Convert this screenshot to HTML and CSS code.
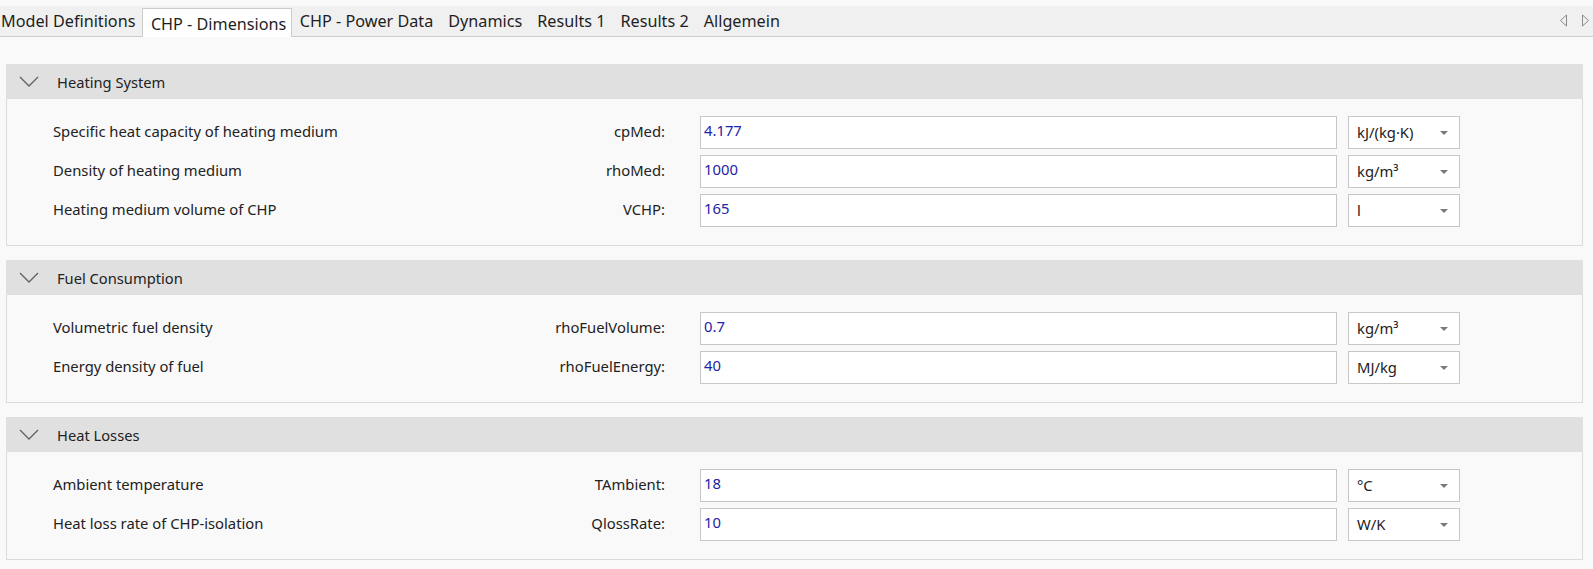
FILE: index.html
```html
<!DOCTYPE html>
<html lang="en">
<head>
<meta charset="UTF-8">
<meta name="viewport" content="width=device-width, initial-scale=1.0">
<title>CHP - Dimensions</title>
<link rel="stylesheet" href="styles.css">
</head>
<body>
<div class="tabbar">
  <div class="tab first">Model Definitions</div>
  <div class="tab active">CHP - Dimensions</div>
  <div class="tab">CHP - Power Data</div>
  <div class="tab">Dynamics</div>
  <div class="tab">Results 1</div>
  <div class="tab">Results 2</div>
  <div class="tab">Allgemein</div>
  <div class="tab-arrows">
    <svg width="9" height="13" viewBox="0 0 9 13"><path d="M7.5 1 L1.5 6.5 L7.5 12 Z" fill="none" stroke="#8a8a8a" stroke-width="1"/></svg>
    <svg width="9" height="13" viewBox="0 0 9 13"><path d="M1.5 1 L7.5 6.5 L1.5 12 Z" fill="none" stroke="#8a8a8a" stroke-width="1"/></svg>
  </div>
</div>

<div class="content">
  <div class="section">
    <div class="section-header">
      <svg class="chevron" width="20" height="11" viewBox="0 0 20 11"><path d="M1 1 L10 10 L19 1" fill="none" stroke="#606060" stroke-width="1.3"/></svg>
      <span>Heating System</span>
    </div>
    <div class="section-body">
      <div class="row">
        <div class="name">Specific heat capacity of heating medium</div>
        <div class="var">cpMed:</div>
        <div class="value">4.177</div>
        <div class="unit">kJ/(kg·K)<span class="arrow"></span></div>
      </div>
      <div class="row">
        <div class="name">Density of heating medium</div>
        <div class="var">rhoMed:</div>
        <div class="value">1000</div>
        <div class="unit">kg/m³<span class="arrow"></span></div>
      </div>
      <div class="row">
        <div class="name">Heating medium volume of CHP</div>
        <div class="var">VCHP:</div>
        <div class="value">165</div>
        <div class="unit">l<span class="arrow"></span></div>
      </div>
    </div>
  </div>

  <div class="section">
    <div class="section-header">
      <svg class="chevron" width="20" height="11" viewBox="0 0 20 11"><path d="M1 1 L10 10 L19 1" fill="none" stroke="#606060" stroke-width="1.3"/></svg>
      <span>Fuel Consumption</span>
    </div>
    <div class="section-body">
      <div class="row">
        <div class="name">Volumetric fuel density</div>
        <div class="var">rhoFuelVolume:</div>
        <div class="value">0.7</div>
        <div class="unit">kg/m³<span class="arrow"></span></div>
      </div>
      <div class="row">
        <div class="name">Energy density of fuel</div>
        <div class="var">rhoFuelEnergy:</div>
        <div class="value">40</div>
        <div class="unit">MJ/kg<span class="arrow"></span></div>
      </div>
    </div>
  </div>

  <div class="section">
    <div class="section-header">
      <svg class="chevron" width="20" height="11" viewBox="0 0 20 11"><path d="M1 1 L10 10 L19 1" fill="none" stroke="#606060" stroke-width="1.3"/></svg>
      <span>Heat Losses</span>
    </div>
    <div class="section-body">
      <div class="row">
        <div class="name">Ambient temperature</div>
        <div class="var">TAmbient:</div>
        <div class="value">18</div>
        <div class="unit">°C<span class="arrow"></span></div>
      </div>
      <div class="row">
        <div class="name">Heat loss rate of CHP-isolation</div>
        <div class="var">QlossRate:</div>
        <div class="value">10</div>
        <div class="unit">W/K<span class="arrow"></span></div>
      </div>
    </div>
  </div>
</div>
</body>
</html>
```

FILE: styles.css
```css
body {
  margin: 0;
  padding: 0;
  background-color: #f9f9f9;
  font-family: "Noto Sans", "Open Sans", sans-serif;
  color: #222;
}
.tabbar {
  margin-top: 6px;
  height: 30px;
  background-color: #f0f0f0;
  border-bottom: 1px solid #cccccc;
  display: flex;
  align-items: stretch;
  font-size: 16.2px;
}
.tab {
  padding: 0 7.5px;
  display: flex;
  align-items: center;
  color: #1e1e1e;
  white-space: nowrap;
}
.tab.first {
  padding-left: 1px;
}
.tab.active {
  margin-top: 2px;
  margin-bottom: -1px;
  margin-left: -1px;
  padding: 1px 5px 0 8px;
  background-color: #fff;
  border: 1px solid #cccccc;
  border-bottom: none;
}
.tab-arrows {
  margin-left: auto;
  margin-right: 3px;
  display: flex;
  align-items: center;
  gap: 13px;
  padding-bottom: 2px;
}
.content {
  padding: 27px 10px 0 6px;
}
.section {
  margin-bottom: 14px;
}
.section-header {
  height: 35px;
  background-color: #e0e0e0;
  display: flex;
  align-items: center;
  font-size: 14.7px;
}
.chevron {
  margin-left: 13px;
  margin-right: 18px;
}
.section-body {
  border: 1px solid #dadada;
  border-top: none;
  padding: 17px 0 18px 46px;
  display: flex;
  flex-direction: column;
  gap: 6px;
}
.row {
  display: flex;
  align-items: center;
  height: 33px;
  font-size: 14.8px;
}
.name {
  width: 300px;
  padding-bottom: 3px;
}
.var {
  width: 312px;
  text-align: right;
  padding-bottom: 3px;
}
.value {
  margin-left: 35px;
  width: 637px;
  height: 33px;
  box-sizing: border-box;
  background-color: #fff;
  border: 1px solid #c6c6c6;
  padding: 0 0 4px 3px;
  line-height: 27px;
  color: #2323a8;
}
.unit {
  position: relative;
  margin-left: 11px;
  width: 112px;
  height: 33px;
  box-sizing: border-box;
  background-color: #fff;
  border: 1px solid #c6c6c6;
  padding-left: 8px;
  line-height: 30px;
  color: #222;
}
.arrow {
  position: absolute;
  right: 11px;
  top: 14px;
  width: 0;
  height: 0;
  border-left: 4px solid transparent;
  border-right: 4px solid transparent;
  border-top: 4px solid #7a7a7a;
}
```
